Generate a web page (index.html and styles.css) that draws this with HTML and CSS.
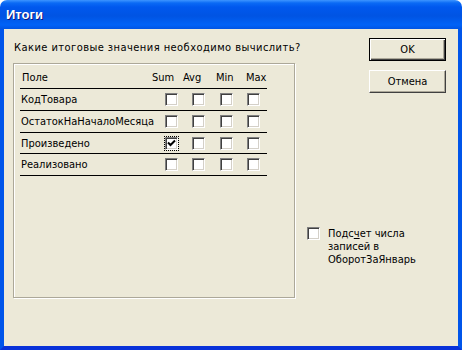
FILE: index.html
```html
<!DOCTYPE html>
<html>
<head>
    <meta charset="utf-8">
    <link rel="stylesheet" href="styles.css">
</head>
<body>
    <div class="window">
        <div class="titlebar">Итоги</div>
        <div class="client">
            <div class="main">
                <p class="prompt">Какие итоговые значения необходимо вычислить?</p>
                <div class="group">
                    <div class="head">
                        <span>Поле</span>
                        <span>Sum</span>
                        <span>Avg</span>
                        <span>Min</span>
                        <span>Max</span>
                    </div>
                    <div class="row">
                        <span class="field">КодТовара</span>
                        <span class="check"></span>
                        <span class="check"></span>
                        <span class="check"></span>
                        <span class="check"></span>
                    </div>
                    <div class="row">
                        <span class="field">ОстатокНаНачалоМесяца</span>
                        <span class="check"></span>
                        <span class="check"></span>
                        <span class="check"></span>
                        <span class="check"></span>
                    </div>
                    <div class="row short">
                        <span class="field">Произведено</span>
                        <span class="check checked focus">
                            <svg width="11" height="11" viewBox="0 0 11 11"><path d="M2 4.5 L4.5 7 L9 2.5" fill="none" stroke="#000" stroke-width="2"/></svg>
                        </span>
                        <span class="check"></span>
                        <span class="check"></span>
                        <span class="check"></span>
                    </div>
                    <div class="row">
                        <span class="field">Реализовано</span>
                        <span class="check"></span>
                        <span class="check"></span>
                        <span class="check"></span>
                        <span class="check"></span>
                    </div>
                </div>
            </div>
            <div class="side">
                <button class="btn default">OK</button>
                <button class="btn">Отмена</button>
                <label class="count">
                    <span class="check"></span>
                    <span class="count-text">Подс<u>ч</u>ет числа записей в ОборотЗаЯнварь</span>
                </label>
            </div>
        </div>
    </div>
</body>
</html>
```

FILE: styles.css
```css
body {
    margin: 0;
    background-color: #fff;
    font-family: "DejaVu Sans Condensed", "Liberation Sans", Arial, sans-serif;
    font-size: 11px;
    color: #000;
}

.window {
    width: 462px;
    height: 350px;
    display: flex;
    flex-direction: column;
}

.titlebar {
    height: 29px;
    flex: 0 0 29px;
    box-sizing: border-box;
    padding-left: 6px;
    line-height: 30px;
    font-family: "Liberation Sans", Arial, sans-serif;
    font-size: 13px;
    font-weight: bold;
    color: #fff;
    text-shadow: 1px 1px #0a1883;
    border-radius: 7px 7px 0 0;
    background: linear-gradient(to bottom, #3d95ff 0, #0a6af5 3px, #0058ee 7px, #0054e3 16px, #0062f7 25px, #0054e3 29px);
}

.client {
    flex: 1;
    display: flex;
    background-color: #ece9d8;
    border: 4px solid #0055ea;
    border-top: none;
    border-bottom-color: #0831d9;
    padding: 12px 0 0 9px;
}

.main {
    width: 282px;
}

.prompt {
    margin: 0 0 9px 1px;
    line-height: 13px;
    letter-spacing: 0.45px;
    white-space: nowrap;
}

.group {
    height: 230px;
    border: 1px solid #aca899;
    box-shadow: 1px 1px 0 #fff, inset 1px 1px 0 #fff;
    padding: 3px 0 0 6px;
}

.head,
.row {
    width: 247px;
    height: 21px;
    display: grid;
    align-items: center;
    border-bottom: 1px solid #000;
}

.head {
    grid-template-columns: 132px 31px 33px 30px 21px;
}

.head span:first-child {
    padding-left: 2px;
}

.row {
    grid-template-columns: 145px 27px 28px 27px 20px;
}

.row.short {
    height: 20px;
}

.field {
    white-space: nowrap;
    padding-left: 1px;
}

.check {
    display: block;
    flex: none;
    width: 11px;
    height: 11px;
    background-color: #fff;
    border: 1px solid;
    border-color: #808080 #fff #fff #808080;
    box-shadow: inset 1px 1px 0 #404040, inset -1px -1px 0 #d4d0c8;
}

.check svg {
    display: block;
}

.focus {
    outline: 1px dotted #000;
}

.side {
    flex: 1;
    display: flex;
    flex-direction: column;
    align-items: flex-start;
    padding: 9px 0 0 12px;
    margin-top: -12px;
}

.btn {
    width: 77px;
    height: 23px;
    margin-left: 62px;
    font-family: inherit;
    font-size: 11px;
    background-color: #ece9d8;
    border: 1px solid;
    border-color: #fff #404040 #404040 #fff;
    box-shadow: inset -1px -1px 0 #aca899;
    padding: 0;
}

.btn.default {
    border: 1px solid #000;
    box-shadow: inset 1px 1px 0 #fff, inset -1px -1px 0 #404040, inset -2px -2px 0 #aca899;
}

.btn + .btn {
    margin-top: 9px;
}

.count {
    display: flex;
    gap: 8px;
    margin-top: 134px;
}

.count-text {
    width: 95px;
    line-height: 13px;
}
```
